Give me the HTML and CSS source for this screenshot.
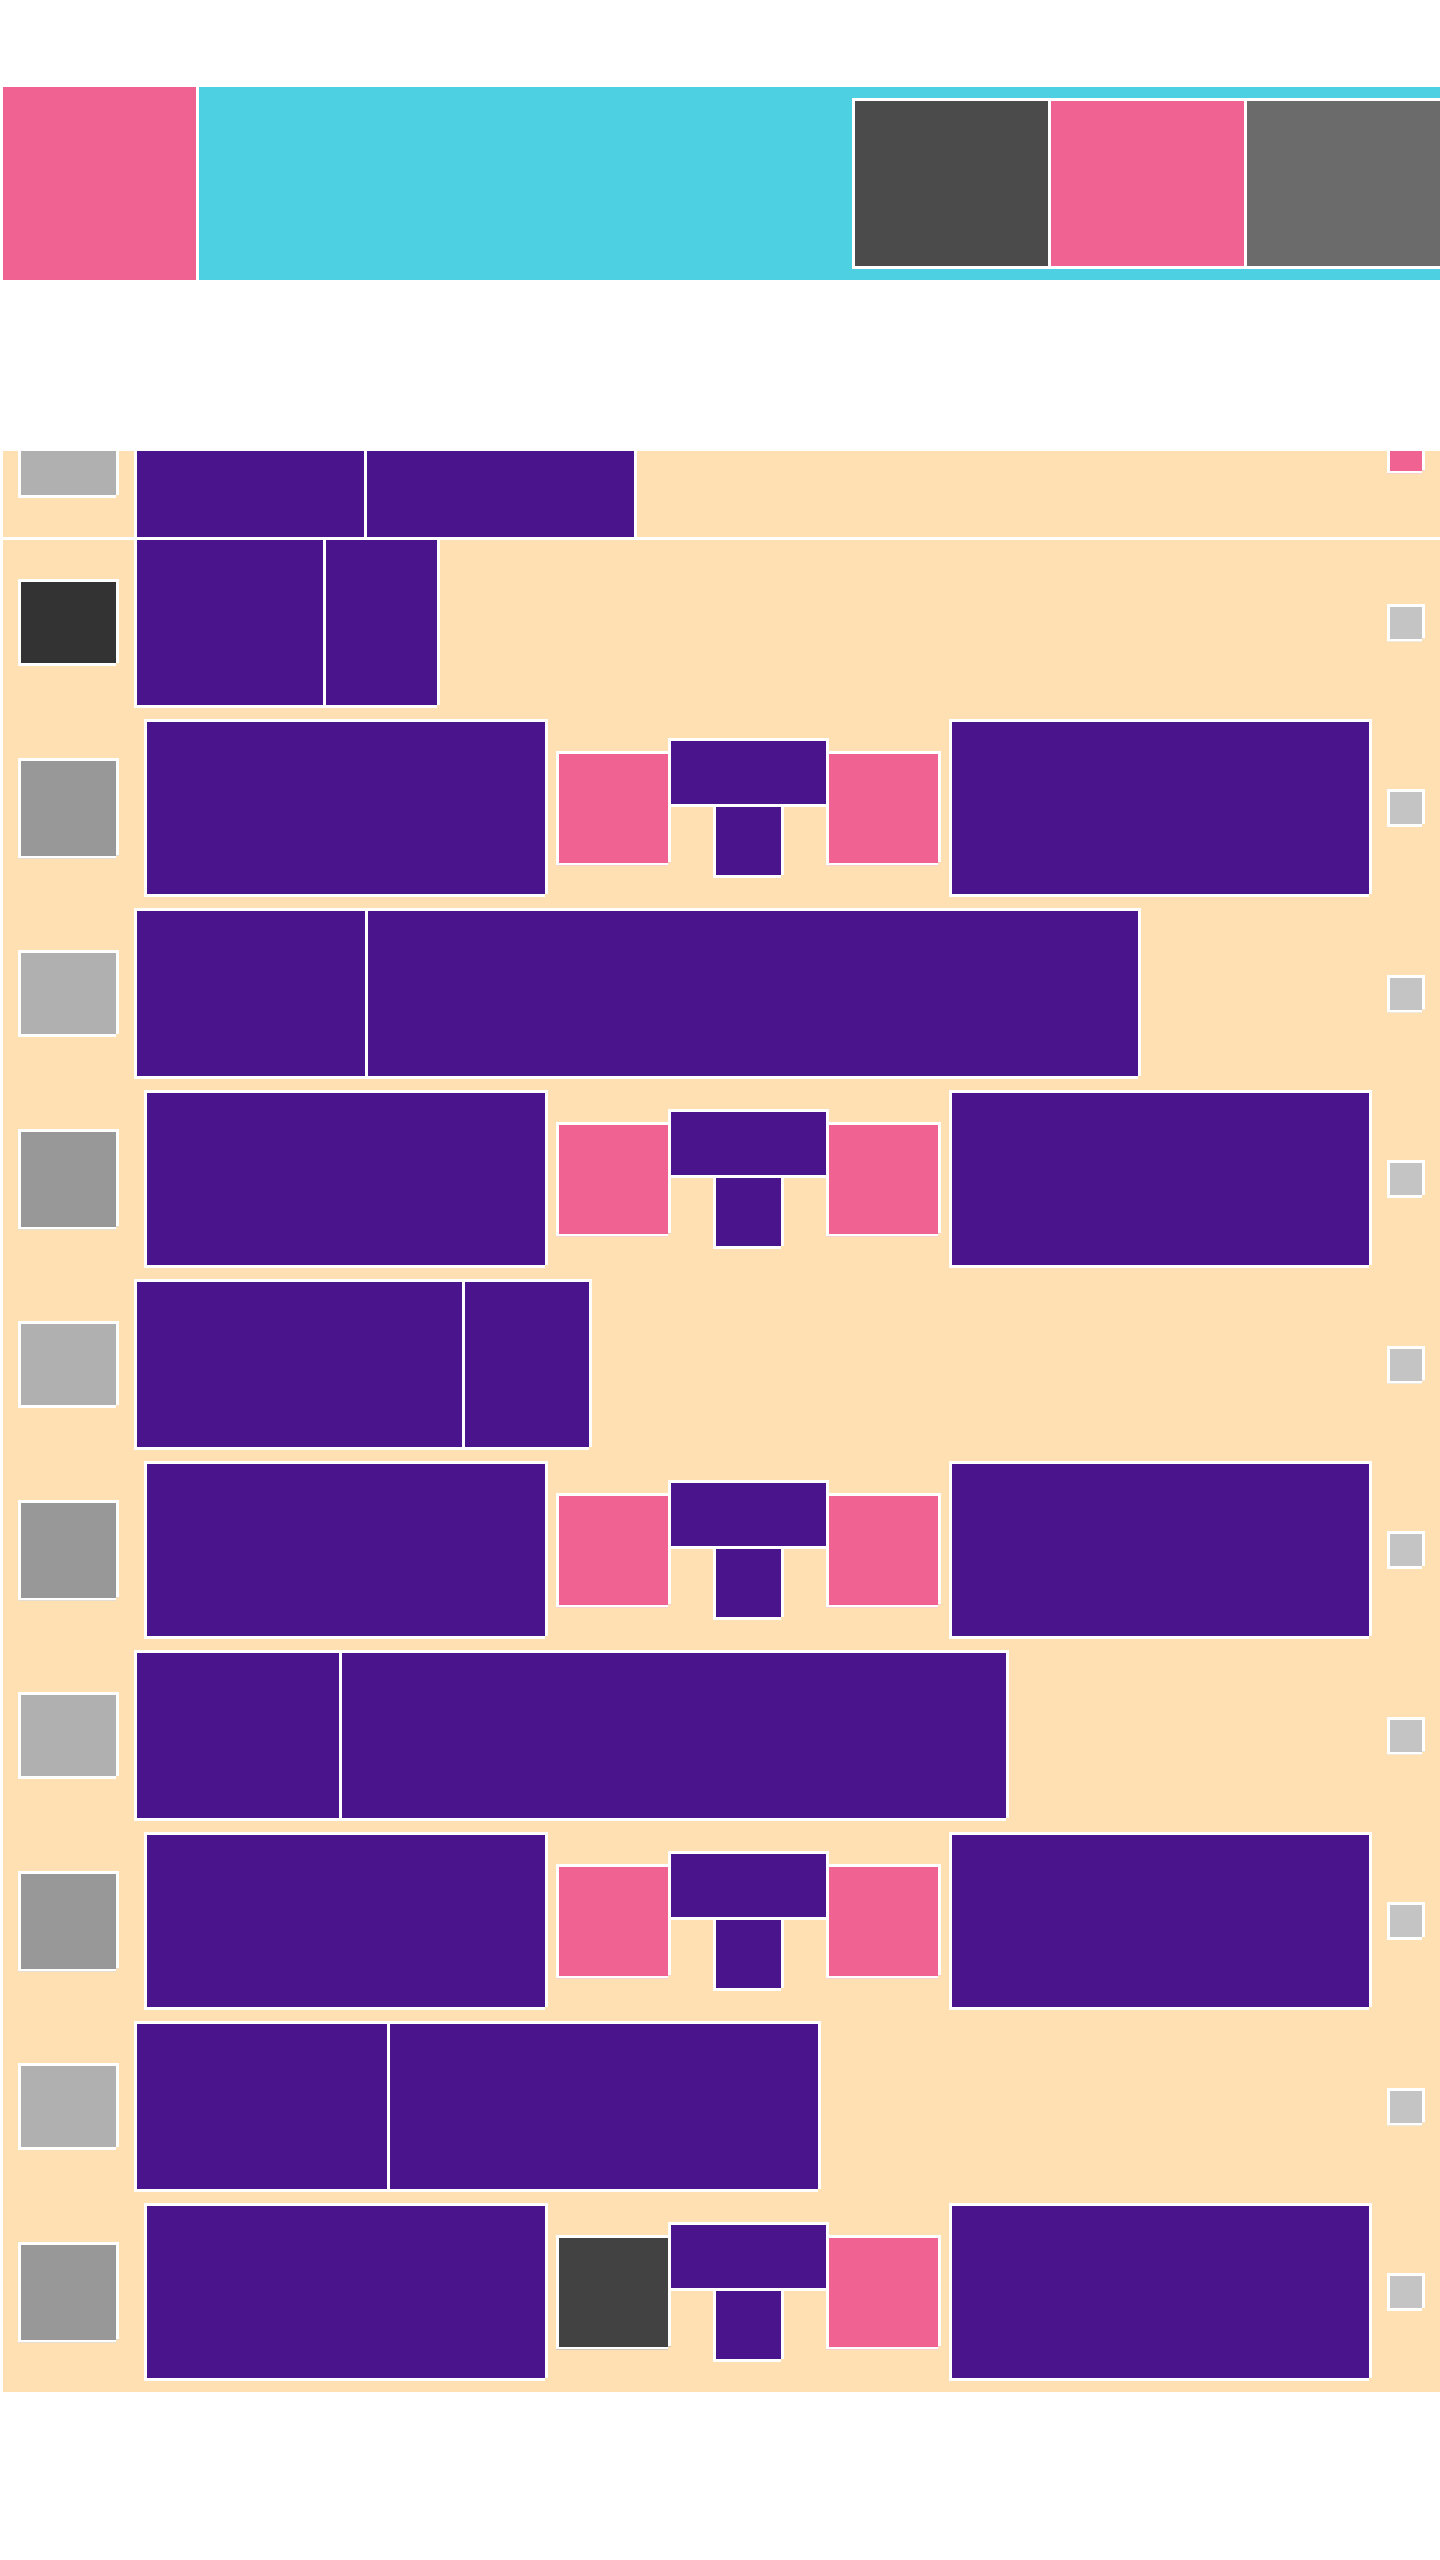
FILE: index.html
```html
<!DOCTYPE html>
<html lang="en">
<head>
    <meta charset="UTF-8">
    <meta name="viewport" content="width=device-width, initial-scale=1.0">
    <title>Media List</title>
    <link rel="stylesheet" href="styles.css">
</head>
<body>
    <div class="page">
        <header class="topbar">
            <div class="topbar-logo"></div>
            <div class="topbar-main">
                <div class="tabs">
                    <div class="tab tab-dark"></div>
                    <div class="tab tab-pink"></div>
                    <div class="tab tab-grey"></div>
                </div>
            </div>
        </header>

        <div class="list">
            <div class="list-scroll">
                <div class="row row-text row-pinned">
                    <div class="boxed thumb"></div>
                    <div class="boxed title">
                        <span class="title-part" style="width: 227px"></span>
                        <span class="title-part" style="width: 267px"></span>
                    </div>
                    <div class="boxed check check-on"></div>
                </div>

                <div class="row row-text">
                    <div class="boxed thumb thumb-dark"></div>
                    <div class="boxed title">
                        <span class="title-part" style="width: 186px"></span>
                        <span class="title-part" style="width: 111px"></span>
                    </div>
                    <div class="boxed check"></div>
                </div>

                <div class="row row-media">
                    <div class="boxed thumb"></div>
                    <div class="boxed media-main"></div>
                    <div class="boxed pill pill-first"></div>
                    <div class="stack">
                        <div class="boxed stack-top"></div>
                        <div class="boxed stack-bottom"></div>
                    </div>
                    <div class="boxed pill"></div>
                    <div class="boxed media-side"></div>
                    <div class="boxed check"></div>
                </div>

                <div class="row row-text">
                    <div class="boxed thumb"></div>
                    <div class="boxed title">
                        <span class="title-part" style="width: 228px"></span>
                        <span class="title-part" style="width: 770px"></span>
                    </div>
                    <div class="boxed check"></div>
                </div>

                <div class="row row-media">
                    <div class="boxed thumb"></div>
                    <div class="boxed media-main"></div>
                    <div class="boxed pill pill-first"></div>
                    <div class="stack">
                        <div class="boxed stack-top"></div>
                        <div class="boxed stack-bottom"></div>
                    </div>
                    <div class="boxed pill"></div>
                    <div class="boxed media-side"></div>
                    <div class="boxed check"></div>
                </div>

                <div class="row row-text">
                    <div class="boxed thumb"></div>
                    <div class="boxed title">
                        <span class="title-part" style="width: 325px"></span>
                        <span class="title-part" style="width: 124px"></span>
                    </div>
                    <div class="boxed check"></div>
                </div>

                <div class="row row-media">
                    <div class="boxed thumb"></div>
                    <div class="boxed media-main"></div>
                    <div class="boxed pill pill-first"></div>
                    <div class="stack">
                        <div class="boxed stack-top"></div>
                        <div class="boxed stack-bottom"></div>
                    </div>
                    <div class="boxed pill"></div>
                    <div class="boxed media-side"></div>
                    <div class="boxed check"></div>
                </div>

                <div class="row row-text">
                    <div class="boxed thumb"></div>
                    <div class="boxed title">
                        <span class="title-part" style="width: 202px"></span>
                        <span class="title-part" style="width: 664px"></span>
                    </div>
                    <div class="boxed check"></div>
                </div>

                <div class="row row-media">
                    <div class="boxed thumb"></div>
                    <div class="boxed media-main"></div>
                    <div class="boxed pill pill-first"></div>
                    <div class="stack">
                        <div class="boxed stack-top"></div>
                        <div class="boxed stack-bottom"></div>
                    </div>
                    <div class="boxed pill"></div>
                    <div class="boxed media-side"></div>
                    <div class="boxed check"></div>
                </div>

                <div class="row row-text">
                    <div class="boxed thumb"></div>
                    <div class="boxed title">
                        <span class="title-part" style="width: 250px"></span>
                        <span class="title-part" style="width: 428px"></span>
                    </div>
                    <div class="boxed check"></div>
                </div>

                <div class="row row-media">
                    <div class="boxed thumb"></div>
                    <div class="boxed media-main"></div>
                    <div class="boxed pill pill-first pill-dark"></div>
                    <div class="stack">
                        <div class="boxed stack-top"></div>
                        <div class="boxed stack-bottom"></div>
                    </div>
                    <div class="boxed pill"></div>
                    <div class="boxed media-side"></div>
                    <div class="boxed check"></div>
                </div>
            </div>
        </div>
    </div>
</body>
</html>
```

FILE: styles.css
```css
* {
    box-sizing: border-box;
}

body {
    margin: 0;
    background-color: #ffffff;
    font-family: "Liberation Sans", Arial, sans-serif;
    overflow-x: hidden;
}

.page {
    width: 1440px;
    margin-left: 3px;
    padding-top: 87px;
}

/* top bar */

.topbar {
    display: flex;
    gap: 3px;
    height: 193px;
}

.topbar-logo {
    width: 193px;
    background-color: #f06292;
}

.topbar-main {
    flex: 1;
    display: flex;
    align-items: center;
    justify-content: flex-end;
    background-color: #4dd0e1;
}

.tabs {
    display: flex;
    gap: 3px;
    padding: 3px;
    background-color: #ffffff;
}

.tab {
    width: 193px;
    height: 165px;
}

.tab-dark {
    background-color: #4b4b4b;
}

.tab-pink {
    background-color: #f06292;
}

.tab-grey {
    background-color: #6b6b6b;
}

/* white frame with the bottom-right corner left open */

.boxed {
    border: 3px solid #ffffff;
    clip-path: polygon(0 0, 100% 0, 100% calc(100% - 3px), calc(100% - 3px) calc(100% - 3px), calc(100% - 3px) 100%, 0 100%);
}

/* list */

.list {
    margin-top: 171px;
    background-color: #ffe0b2;
    overflow: hidden;
}

.list-scroll {
    margin-top: -82px;
    padding-bottom: 11px;
}

.row {
    display: flex;
    align-items: center;
    padding: 0 18px 0 15px;
}

.row + .row {
    margin-top: 11px;
}

.row-pinned {
    position: relative;
    z-index: 1;
    box-shadow: inset 0 -3px 0 #ffffff;
}

.row-pinned + .row {
    margin-top: -3px;
}

.row-text {
    height: 171px;
}

.row-media {
    height: 178px;
}

.thumb {
    width: 101px;
    height: 87px;
    background-color: #b0b0b0;
}

.thumb-dark {
    background-color: #333333;
}

.row-media .thumb {
    height: 101px;
    background-color: #989898;
}

.title {
    display: flex;
    gap: 3px;
    height: 171px;
    margin-left: 15px;
    background-color: #ffffff;
}

.title-part {
    background-color: #4a148c;
}

.check {
    width: 38px;
    height: 38px;
    margin-left: auto;
    background-color: #c4c4c4;
}

.check-on {
    background-color: #f06292;
}

/* media row */

.media-main {
    width: 404px;
    height: 178px;
    margin-left: 25px;
    background-color: #4a148c;
}

.media-side {
    width: 423px;
    height: 178px;
    margin-left: 8px;
    background-color: #4a148c;
}

.pill {
    width: 115px;
    height: 115px;
    background-color: #f06292;
}

.pill-first {
    margin-left: 8px;
}

.pill-dark {
    background-color: #424242;
}

.stack {
    display: flex;
    flex-direction: column;
    align-items: center;
    margin: 0 -3px;
}

.stack-top {
    width: 161px;
    height: 69px;
    background-color: #4a148c;
}

.stack-bottom {
    width: 71px;
    height: 74px;
    margin-top: -3px;
    background-color: #4a148c;
}
```
